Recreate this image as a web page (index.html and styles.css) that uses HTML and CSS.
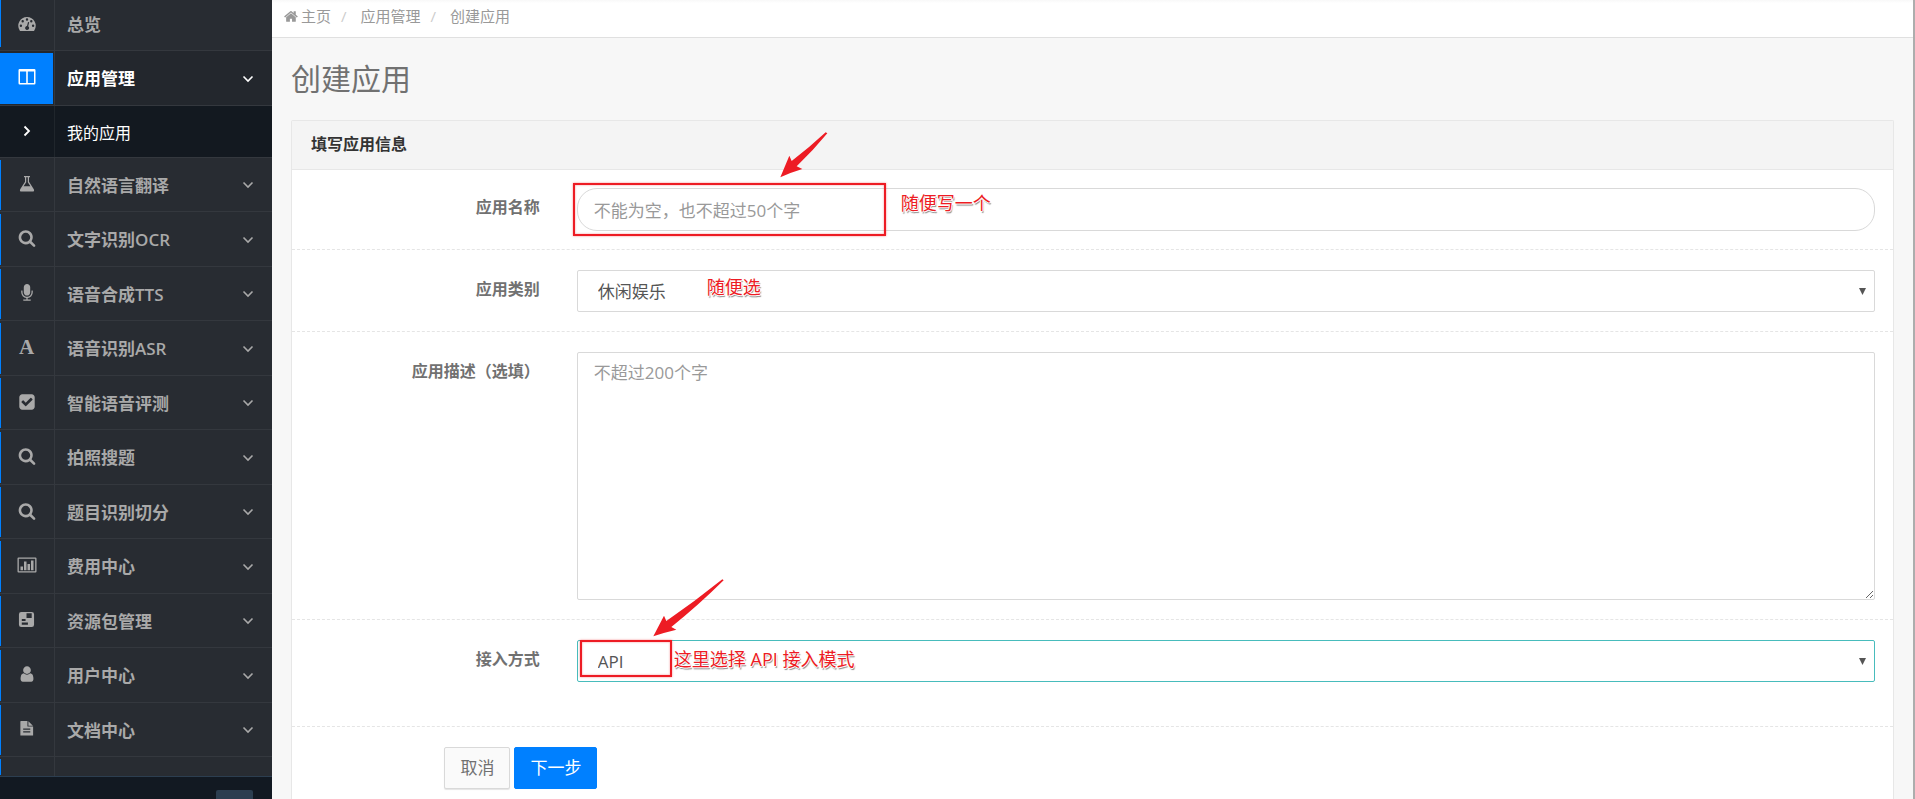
FILE: index.html
```html
<!DOCTYPE html>
<html lang="zh-CN">
<head>
<meta charset="utf-8">
<title>创建应用</title>
<link rel="stylesheet" href="styles.css">
</head>
<body>
<svg class="defs" aria-hidden="true">
  <symbol id="i-home" viewBox="0 0 1792 1792"><path d="M1408 992v480q0 26-19 45t-45 19h-384v-384h-256v384h-384q-26 0-45-19t-19-45v-480q0-1 .5-3t.5-3l575-474 575 474q1 2 1 6zm223-69l-62 74q-8 9-21 11h-3q-13 0-21-7l-692-577-692 577q-12 8-24 7-13-2-21-11l-62-74q-8-10-7-23.5t11-21.5l719-599q32-26 76-26t76 26l244 204v-195q0-14 9-23t23-9h192q14 0 23 9t9 23v408l219 182q10 8 11 21.5t-7 23.5z"/></symbol>
  <symbol id="i-search" viewBox="0 0 1792 1792"><path d="M1216 832q0-185-131.5-316.5t-316.5-131.5-316.5 131.5-131.5 316.5 131.5 316.5 316.5 131.5 316.5-131.5 131.5-316.5zm512 832q0 52-38 90t-90 38q-54 0-90-38l-343-342q-179 124-399 124-143 0-273.5-55.5t-225-150-150-225-55.5-273.5 55.5-273.5 150-225 225-150 273.5-55.5 273.5 55.5 225 150 150 225 55.5 273.5q0 220-124 399l343 343q37 37 37 90z"/></symbol>
  <symbol id="i-user" viewBox="0 0 1792 1792"><path d="M1536 1399q0 109-62.500 187t-150.500 78h-854q-88 0-150.500-78t-62.500-187q0-85 8.500-160.500t31.500-152 58.500-131 94-89 134.500-34.500q131 128 313 128t313-128q76 0 134.500 34.500t94 89 58.500 131 31.500 152 8.500 160.500zm-256-887q0 159-112.500 271.500t-271.500 112.500-271.500-112.500-112.500-271.500 112.500-271.500 271.500-112.500 271.500 112.500 112.500 271.500z"/></symbol>
  <symbol id="i-check" viewBox="0 0 1792 1792"><path d="M813 1299l614-614q19-19 19-45t-19-45l-102-102q-19-19-45-19t-45 19l-467 467-211-211q-19-19-45-19t-45 19l-102 102q-19 19-19 45t19 45l358 358q19 19 45 19t45-19zm851-883v960q0 119-84.500 203.500t-203.500 84.500h-960q-119 0-203.500-84.500t-84.500-203.500v-960q0-119 84.500-203.500t203.500-84.500h960q119 0 203.500 84.500t84.500 203.500z"/></symbol>
  <symbol id="i-mic" viewBox="0 0 1792 1792"><path d="M1472 704v128q0 221-147.500 384.500t-364.500 187.500v132h256q26 0 45 19t19 45-19 45-45 19h-640q-26 0-45-19t-19-45 19-45 45-19h256v-132q-217-24-364.500-187.500t-147.500-384.500v-128q0-26 19-45t45-19 45 19 19 45v128q0 185 131.500 316.500t316.500 131.500 316.500-131.500 131.500-316.500v-128q0-26 19-45t45-19 45 19 19 45zm-256-384v512q0 132-94 226t-226 94-226-94-94-226v-512q0-132 94-226t226-94 226 94 94 226z"/></symbol>
  <symbol id="i-dash" viewBox="0 0 18 18"><path fill-rule="evenodd" d="M9 2a8.800 8.800 0 0 1 7.300 13.500q-.3.500-.9.500H2.600q-.6 0-.9-.5A8.800 8.800 0 0 1 9 2zM9 3.300a1.200 1.200 0 1 0 0 2.400 1.200 1.200 0 0 0 0-2.400zM4.700 5.100a1.200 1.200 0 1 0 0 2.400 1.200 1.200 0 0 0 0-2.400zM13.300 5.100a1.200 1.200 0 1 0 0 2.400 1.200 1.200 0 0 0 0-2.400zM2.900 9.500a1.200 1.200 0 1 0 0 2.400 1.200 1.200 0 0 0 0-2.400zM15.100 9.500a1.200 1.200 0 1 0 0 2.400 1.200 1.200 0 0 0 0-2.400zM10 7l-1 4a2 2 0 1 0 1.200.3L11.200 7.300z"/></symbol>
  <symbol id="i-columns" viewBox="0 0 18 18"><path fill-rule="evenodd" d="M1.700 1h14.600q1.200 0 1.200 1.200v13.100q0 1.200-1.200 1.200H1.700Q.5 16.500.5 15.300V2.200Q.5 1 1.700 1zM2 3.500V15h6.200V3.500zM9.800 3.500V15H16V3.500z"/></symbol>
  <symbol id="i-flask" viewBox="0 0 18 18"><path fill-rule="evenodd" d="M6 1h6v1.200h-1v4.600l4.800 7.400Q16.800 16.500 14.500 16.500h-11Q1.200 16.500 2.200 14.200L7 6.800V2.200H6zM8.200 2.200v5L5.600 11.200h6.800L9.800 7.200v-5z"/></symbol>
  <symbol id="i-chart" viewBox="0 0 20 18"><path fill-rule="evenodd" d="M1.500 1.500h17q1 0 1 1v13q0 1-1 1h-17q-1 0-1-1v-13q0-1 1-1zM1.800 2.800v12.400h16.400V2.800zM3.500 10.500H6v3.700H3.500zM7 5.500h2.500v8.700H7zM10.500 8H13v6.200h-2.500zM14 4.500h2.500v9.700H14z"/></symbol>
  <symbol id="i-pack" viewBox="0 0 18 18"><path fill-rule="evenodd" d="M3.500 1h11Q17 1 17 3.500v11q0 2.500-2.500 2.500h-11Q1 17 1 14.500v-11Q1 1 3.500 1zM9 2.500v5h5.500v-5zM4 8.500v2.200h4V8.500zM4 12.300v2.200h6.500v-2.200z"/></symbol>
  <symbol id="i-file" viewBox="0 0 18 18"><path fill-rule="evenodd" d="M3 1h7v6h6v9.500H2.500V1.500Q2.500 1 3 1zM11 1.200L15.800 6H11zM5.500 9v1.200H13V9zM5.500 12v1.200H13V12z"/></symbol>
  <symbol id="i-down" viewBox="0 0 12 8"><path d="M1.500 1.500L6 6l4.500-4.500" fill="none" stroke="currentColor" stroke-width="1.600"/></symbol>
  <symbol id="i-right" viewBox="0 0 8 12"><path d="M1.500 1.500L6 6l-4.500 4.500" fill="none" stroke="currentColor" stroke-width="1.800"/></symbol>
  <symbol id="i-tri" viewBox="0 0 7 7"><path d="M0 0h7L3.500 7z"/></symbol>
</svg>

<div class="app">
  <aside class="sidebar">
    <nav class="menu">
      <a class="item first" href="#"><span class="cell"><svg class="icon"><use href="#i-dash"/></svg></span><span class="name">总览</span></a>
      <a class="item active" href="#"><span class="cell"><svg class="icon"><use href="#i-columns"/></svg></span><span class="name">应用管理</span><svg class="chev"><use href="#i-down"/></svg></a>
      <a class="item sub" href="#"><span class="cell"><svg class="arrow-r"><use href="#i-right"/></svg></span><span class="name">我的应用</span></a>
      <a class="item" href="#"><span class="cell"><svg class="icon"><use href="#i-flask"/></svg></span><span class="name">自然语言翻译</span><svg class="chev"><use href="#i-down"/></svg></a>
      <a class="item" href="#"><span class="cell"><svg class="icon"><use href="#i-search"/></svg></span><span class="name">文字识别OCR</span><svg class="chev"><use href="#i-down"/></svg></a>
      <a class="item" href="#"><span class="cell"><svg class="icon"><use href="#i-mic"/></svg></span><span class="name">语音合成TTS</span><svg class="chev"><use href="#i-down"/></svg></a>
      <a class="item" href="#"><span class="cell"><span class="letter" aria-hidden="true">A</span></span><span class="name">语音识别ASR</span><svg class="chev"><use href="#i-down"/></svg></a>
      <a class="item" href="#"><span class="cell"><svg class="icon"><use href="#i-check"/></svg></span><span class="name">智能语音评测</span><svg class="chev"><use href="#i-down"/></svg></a>
      <a class="item" href="#"><span class="cell"><svg class="icon"><use href="#i-search"/></svg></span><span class="name">拍照搜题</span><svg class="chev"><use href="#i-down"/></svg></a>
      <a class="item" href="#"><span class="cell"><svg class="icon"><use href="#i-search"/></svg></span><span class="name">题目识别切分</span><svg class="chev"><use href="#i-down"/></svg></a>
      <a class="item" href="#"><span class="cell"><svg class="icon wide"><use href="#i-chart"/></svg></span><span class="name">费用中心</span><svg class="chev"><use href="#i-down"/></svg></a>
      <a class="item" href="#"><span class="cell"><svg class="icon small"><use href="#i-pack"/></svg></span><span class="name">资源包管理</span><svg class="chev"><use href="#i-down"/></svg></a>
      <a class="item" href="#"><span class="cell"><svg class="icon"><use href="#i-user"/></svg></span><span class="name">用户中心</span><svg class="chev"><use href="#i-down"/></svg></a>
      <a class="item" href="#"><span class="cell"><svg class="icon small"><use href="#i-file"/></svg></span><span class="name">文档中心</span><svg class="chev"><use href="#i-down"/></svg></a>
      <div class="item rest"><span class="cell"></span></div>
    </nav>
    <div class="side-foot"><button class="toggle" type="button" aria-label="收起菜单"></button></div>
  </aside>

  <main class="main">
    <nav class="crumbs">
      <a href="#"><svg class="home"><use href="#i-home"/></svg>主页</a><span class="sep">/</span><a href="#">应用管理</a><span class="sep">/</span><a href="#">创建应用</a>
    </nav>
    <div class="content">
      <h1 class="title">创建应用</h1>
      <section class="panel">
        <h2 class="panel-head">填写应用信息</h2>
        <form>
          <div class="row row-name">
            <label class="label" for="name">应用名称</label>
            <div class="field">
              <div class="control">
                <input class="box round" id="name" type="text" placeholder="不能为空，也不超过50个字">
                <div class="mark mark-name"></div>
                <svg class="pointer pointer-name" viewBox="0 0 144 138"><path d="M1 136L28 71l7 16Q90 45 137 1l5 3Q100 55 50 103l17 8Q30 122 1 136z"/></svg>
                <span class="note note-name">随便写一个</span>
              </div>
            </div>
          </div>
          <div class="row">
            <label class="label" for="kind">应用类别</label>
            <div class="field">
              <div class="control">
                <select class="box pick" id="kind"><option>休闲娱乐</option></select>
                <svg class="tri"><use href="#i-tri"/></svg>
                <span class="note note-kind">随便选</span>
              </div>
            </div>
          </div>
          <div class="row">
            <label class="label" for="desc">应用描述（选填）</label>
            <div class="field">
              <textarea class="box area" id="desc" placeholder="不超过200个字"></textarea>
            </div>
          </div>
          <div class="row row-mode">
            <label class="label" for="mode">接入方式</label>
            <div class="field">
              <div class="control">
                <select class="box pick focus" id="mode"><option>API</option></select>
                <svg class="tri"><use href="#i-tri"/></svg>
                <div class="mark mark-mode"></div>
                <svg class="pointer pointer-mode" viewBox="0 0 216 174"><path d="M1 172L33 110l7 16Q125 68 208 1l4 3Q135 80 55 144l15 8Q35 160 1 172z"/></svg>
                <span class="note note-mode">这里选择 API 接入模式</span>
              </div>
            </div>
          </div>
          <div class="actions">
            <div class="buttons">
              <button class="btn" type="button">取消</button>
              <button class="btn primary" type="submit">下一步</button>
            </div>
          </div>
        </form>
      </section>
    </div>
  </main>
</div>
</body>
</html>
```

FILE: styles.css
```css
* { box-sizing: border-box; }

body {
  margin: 0;
  font-family: "Open Sans", "Noto Sans CJK SC", sans-serif;
  font-size: 17px;
  line-height: 24px;
  color: #717171;
  background: #f7f7f7;
}

a { color: inherit; text-decoration: none; }
svg { fill: currentColor; flex: none; }
.defs { display: none; }

.app {
  display: flex;
  height: 100vh;
  overflow: hidden;
}

/* sidebar */
.sidebar {
  flex: none;
  width: 272px;
  display: flex;
  flex-direction: column;
  background: #282c32;
}
.menu {
  flex: 1;
  display: flex;
  flex-direction: column;
}
.item {
  flex: 1 1 0;
  min-height: 0;
  display: flex;
  align-items: center;
  border-bottom: 1px solid #34383e;
  color: #a9a9a9;
  font-weight: 600;
}
.cell {
  align-self: stretch;
  flex: none;
  width: 55px;
  display: flex;
  align-items: center;
  justify-content: center;
  border-right: 1px solid #34383e;
  padding: 0 1px 1px 0;
  background: linear-gradient(#0080ff, #0080ff) 0 2px / 1px calc(100% - 3px) no-repeat;
}
.name { flex: 1; padding: 3px 0 0 12px; }
.icon { width: 18px; height: 18px; }
.icon.wide { width: 20px; }
.icon.small { width: 17px; height: 17px; }
.letter { font: bold 21px/20px "Liberation Serif", serif; }
.chev { width: 12px; height: 8px; margin: 2px 18px 0 0; }
.arrow-r { width: 8px; height: 12px; }

.first { flex: 0 0 51px; }
.first .cell { background-position: 0 0; padding-bottom: 2px; }
.first .name { padding-top: 0; }
.active { color: #fff; background: #23272d; }
.active .cell { background-size: 53px calc(100% - 3px); }
.sub {
  flex: 0 0 52px;
  background: #131920;
  color: #fff;
  font-size: 16px;
  font-weight: 400;
}
.sub .cell { background: none; padding-bottom: 0; border-color: #20262c; }
.rest { flex: 0 0 19px; border-bottom: 0; }

.side-foot {
  display: flex;
  justify-content: flex-end;
  height: 23px;
  padding: 13px 19px 0 0;
  overflow: hidden;
  border-top: 1px solid #2c3e50;
  background: #121922;
}
.toggle {
  width: 37px;
  height: 30px;
  border: 0;
  border-radius: 2px;
  background: #2c3e50;
}

/* main */
.main {
  flex: 1;
  min-width: 0;
  display: flex;
  flex-direction: column;
  border-right: 2px solid #adadad;
}
.crumbs {
  flex: none;
  display: flex;
  align-items: center;
  height: 38px;
  padding: 0 12px 5px;
  border-bottom: 1px solid #e0e0e0;
  background: linear-gradient(#f8f8f8, #fff 3px);
  color: #999;
  font-size: 15px;
}
.crumbs a { display: flex; align-items: center; }
.home { width: 15px; height: 15px; margin-right: 2px; }
.sep { padding: 0 14px 0 10px; color: #ccc; }

.content {
  flex: 1;
  min-height: 0;
  display: flex;
  flex-direction: column;
  padding: 0 19px;
}
.title {
  margin: 0;
  padding: 21px 0;
  font-size: 30px;
  line-height: 40px;
  font-weight: 400;
}
.panel {
  flex: 1;
  border: 1px solid #e7e7e7;
  border-bottom: 0;
  border-radius: 2px 2px 0 0;
  background: #fff;
}
.panel-head {
  margin: 0;
  padding: 11px 19px 13px;
  border-bottom: 1px solid #e7e7e7;
  background: #f4f4f4;
  color: #333;
  font-size: 16px;
  font-weight: 600;
}

.row {
  display: grid;
  grid-template-columns: 1fr 5fr;
  padding: 20px 0 19px;
  border-bottom: 1px dashed #e5e5e5;
}
.row-name { padding: 18px 0; }
.row-mode { padding-bottom: 44px; }
.label {
  padding: 7px 19px 0 0;
  text-align: right;
  font-size: 16px;
  font-weight: 600;
}
.field { min-width: 0; padding: 0 18px; }
.control { position: relative; }

.box {
  display: block;
  width: 100%;
  height: 42px;
  margin: 0;
  padding: 2px 16px 0;
  border: 1px solid #d9d9d9;
  border-radius: 2px;
  outline: 0;
  background: #fff;
  color: #555;
  font: inherit;
}
.box::placeholder { color: #999; opacity: 1; }
.round { height: 43px; border-radius: 20px; }
.pick { appearance: none; padding: 2px 20px 0; }
.focus { border-color: #48bcbc; }
.area { height: 248px; padding: 8px 16px; resize: vertical; }
.tri {
  position: absolute;
  top: 18px;
  right: 9px;
  width: 7px;
  height: 7px;
  color: #555;
  pointer-events: none;
}

.actions {
  display: grid;
  grid-template-columns: 1fr 11fr;
  padding: 20px 0;
}
.buttons {
  grid-column: 2;
  display: flex;
  gap: 4px;
  padding: 0 19px;
}
.btn {
  height: 42px;
  padding: 0 15px;
  border: 1px solid #d9d9d9;
  border-radius: 2px;
  background: #fafafa;
  box-shadow: 0 1px 1px #e5e5e5;
  color: #717171;
  font: inherit;
}
.primary {
  border-color: #0080ff;
  background: #0080ff;
  box-shadow: none;
  color: #fff;
}

/* annotations lying over the controls */
.mark {
  position: absolute;
  border: 2px solid #ed1c24;
  box-shadow: 0 0 2px #ed1c2480, inset 0 0 2px #ed1c2480;
  pointer-events: none;
}
.mark-name { left: -4px; top: -5px; width: 313px; height: 53px; }
.mark-mode { left: 3px; top: 0; width: 92px; height: 37px; }
.pointer { position: absolute; color: #ed1c24; pointer-events: none; }
.pointer-name { left: 203px; top: -56px; width: 48px; height: 46px; }
.pointer-mode { left: 76px; top: -61px; width: 72px; height: 58px; }
.note {
  position: absolute;
  white-space: nowrap;
  color: #ed1c24;
  font-size: 18px;
  text-shadow: 1px 0 #fff, -1px 0 #fff, 0 1px #fff, 0 -1px #fff, 1px 2px 1px #888;
  pointer-events: none;
}
.note-name { left: 324px; top: 3px; }
.note-kind { left: 130px; top: 5px; }
.note-mode { left: 97px; top: 7px; }
```
